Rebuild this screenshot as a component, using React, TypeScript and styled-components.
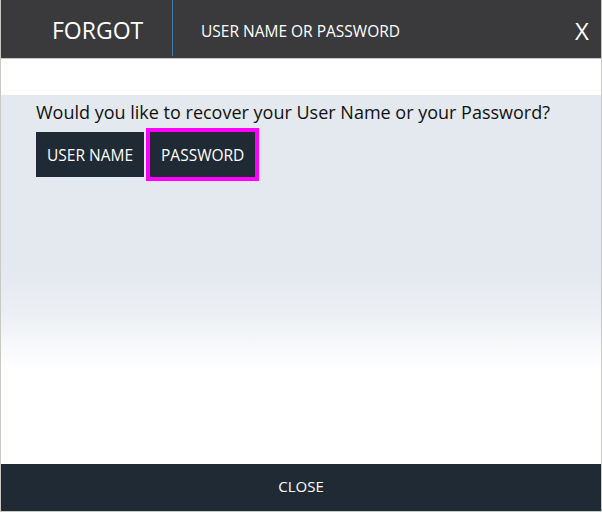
import React from "react";
import styled, { createGlobalStyle } from "styled-components";

const Global = createGlobalStyle`
  html, body { margin: 0; padding: 0; background: #ffffff; }
  body { font-family: "Open Sans", "Noto Sans", sans-serif; }
  * { box-sizing: border-box; }
`;

const Frame = styled.div`
  width: 602px;
  height: 512px;
  display: flex;
  flex-direction: column;
  border-left: 1px solid #c9c9c4;
  border-right: 1px solid #c9c9c4;
  border-bottom: 1px solid #c9c9c4;
  background: #ffffff;
`;

const Header = styled.header`
  height: 59px;
  flex: none;
  display: flex;
  align-items: stretch;
  background: #3a3a3c;
  border-bottom: 1px solid #c4c4c4;
`;

const Brand = styled.div`
  width: 172px;
  flex: none;
  display: flex;
  align-items: center;
  padding-left: 51px;
  padding-top: 4px;
  color: #ffffff;
  font-size: 23px;
  border-right: 1px solid #3f7fb5;
  margin-bottom: 2px;
`;

const Title = styled.div`
  flex: 1;
  display: flex;
  align-items: center;
  padding-left: 28px;
  padding-top: 3px;
  color: #ffffff;
  font-size: 15.5px;
`;

const CloseX = styled.div`
  width: 40px;
  flex: none;
  display: flex;
  align-items: center;
  justify-content: center;
  padding-left: 2px;
  padding-top: 3px;
  color: #ffffff;
  font-size: 24px;
`;

const Spacer = styled.div`
  height: 36px;
  flex: none;
  background: #ffffff;
`;

const Body = styled.main`
  flex: 1;
  padding: 4px 35px 0;
  background: linear-gradient(
    to bottom,
    #e4e8ef 0px,
    #e4e8ef 170px,
    #eceff3 220px,
    #f7f8fa 250px,
    #ffffff 275px
  );
`;

const Question = styled.p`
  margin: 0;
  color: #111111;
  font-size: 18px;
  line-height: 26px;
`;

const Choices = styled.div`
  margin-top: 7px;
  display: flex;
  gap: 2px;
`;

const Choice = styled.button<{ $focused?: boolean }>`
  height: 45px;
  padding: 0 11px;
  border: none;
  background: #1f2a35;
  color: #ffffff;
  font-family: "Open Sans", "Noto Sans", sans-serif;
  font-size: 15.5px;
  margin-left: ${(p) => (p.$focused ? "4px" : "0")};
  outline: ${(p) => (p.$focused ? "4px solid #ff00ff" : "none")};
  cursor: pointer;
`;

const Footer = styled.footer`
  height: 47px;
  flex: none;
  display: flex;
  align-items: center;
  justify-content: center;
  padding-bottom: 3px;
  background: #1f2a35;
  color: #ffffff;
  font-size: 15px;
`;

export default function App() {
  return (
    <>
      <Global />
      <Frame>
        <Header>
          <Brand>FORGOT</Brand>
          <Title>USER NAME OR PASSWORD</Title>
          <CloseX>X</CloseX>
        </Header>
        <Spacer />
        <Body>
          <Question>Would you like to recover your User Name or your Password?</Question>
          <Choices>
            <Choice>USER NAME</Choice>
            <Choice $focused>PASSWORD</Choice>
          </Choices>
        </Body>
        <Footer>CLOSE</Footer>
      </Frame>
    </>
  );
}
